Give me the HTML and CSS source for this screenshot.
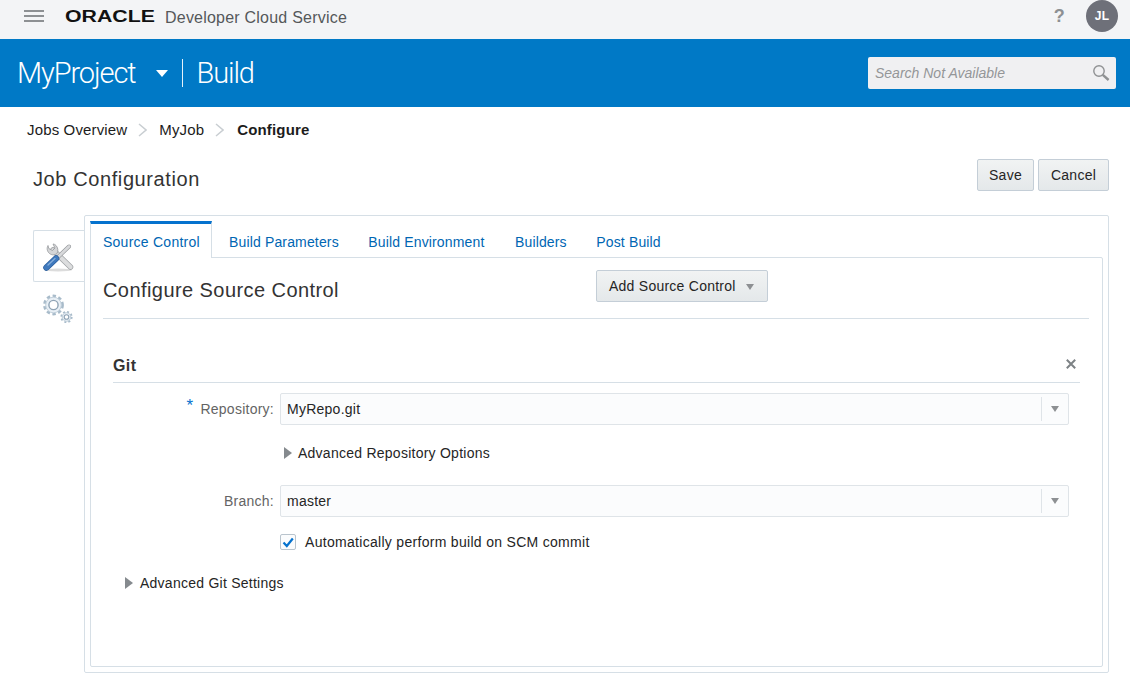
FILE: index.html
```html
<!DOCTYPE html>
<html lang="en">
<head>
    <meta charset="UTF-8">
    <meta name="viewport" content="width=device-width, initial-scale=1.0">
    <title>Job Configuration</title>
    <link rel="stylesheet" href="styles.css">
</head>
<body>
    <div class="topbar">
        <div class="burger"><span></span><span></span><span></span></div>
        <div class="logo"><span class="logo-word">ORACLE</span></div>
        <div class="product">Developer Cloud Service</div>
        <div class="help">?</div>
        <div class="avatar">JL</div>
    </div>
    <div class="projectbar">
        <div class="project">MyProject</div>
        <div class="project-arrow"></div>
        <div class="project-sep"></div>
        <div class="section">Build</div>
        <div class="search">
            <span class="search-text">Search Not Available</span>
            <svg class="search-icon" width="18" height="18" viewBox="0 0 18 18">
                <circle cx="7" cy="7" r="5.2" fill="none" stroke="#8f9193" stroke-width="1.4"/>
                <path d="M10.8 10.8 L16.6 16" stroke="#8f9193" stroke-width="2.4" fill="none"/>
            </svg>
        </div>
    </div>
    <div class="crumbs">
        <a>Jobs Overview</a>
        <svg class="crumb-sep" width="9" height="14" viewBox="0 0 9 14"><path d="M1 1 L8 7 L1 13" fill="none" stroke="#c9ced2" stroke-width="1.5"/></svg>
        <a>MyJob</a>
        <svg class="crumb-sep" width="9" height="14" viewBox="0 0 9 14"><path d="M1 1 L8 7 L1 13" fill="none" stroke="#c9ced2" stroke-width="1.5"/></svg>
        <b class="crumb-on">Configure</b>
    </div>
    <div class="pagehead">
        <h1>Job Configuration</h1>
        <button class="btn btn-save">Save</button>
        <button class="btn btn-cancel">Cancel</button>
    </div>
    <div class="workspace">
        <div class="sidetabs">
            <div class="sidetab sidetab-on">
                <svg width="32" height="32" viewBox="0 0 32 32">
                    <ellipse cx="15" cy="30" rx="14" ry="1.5" fill="#dcdcdc"/>
                    <!-- wrench -->
                    <path d="M10 10 L27.500 27" stroke="#a0a3a6" stroke-width="5.500" stroke-linecap="round"/>
                    <path d="M10 10 L27.500 27" stroke="#dcddde" stroke-width="4" stroke-linecap="round"/>
                    <path d="M5 5.500 C3.500 8 4 11.500 6.500 13.500 C9 15.500 12 15 14 13.500 C15.500 11 15 7.500 13 5.500 C12 4.500 11 4 10 4 L12 8 L9.500 10.500 L5.800 8.500 Z" fill="#d4d5d7" stroke="#94979a" stroke-width="0.8"/>
                    <!-- screwdriver -->
                    <path d="M14 18 L26 6.500" stroke="#94979a" stroke-width="4" stroke-linecap="round"/>
                    <path d="M14 18 L26 6.500" stroke="#d8d9db" stroke-width="2.800" stroke-linecap="round"/>
                    <path d="M3.500 27.500 L13 18.500" stroke="#2d5f9e" stroke-width="6.500" stroke-linecap="round"/>
                    <path d="M3.500 27.500 L13 18.500" stroke="#3f79bd" stroke-width="5" stroke-linecap="round"/>
                    <path d="M5 25 L12 18.500" stroke="#86aedb" stroke-width="1.300" stroke-linecap="round"/>
                </svg>
            </div>
            <div class="sidetab">
                <svg width="32" height="30" viewBox="0 0 32 30">
                    <circle cx="10.500" cy="12" r="8.800" fill="none" stroke="#a8bbca" stroke-width="3.200" stroke-dasharray="3.300 2.460"/>
                    <circle cx="10.500" cy="12" r="7.800" fill="#e9f0f6" stroke="#c3d1dc" stroke-width="1"/>
                    <circle cx="10.500" cy="12" r="4.600" fill="#fff" stroke="#8fa3b5" stroke-width="1.400"/>
                    <circle cx="23.500" cy="24" r="5.200" fill="none" stroke="#a8bbca" stroke-width="1.800" stroke-dasharray="2 2.080"/>
                    <circle cx="23.500" cy="24" r="4.300" fill="#e9f0f6" stroke="#b3c3d0" stroke-width="0.800"/>
                    <circle cx="23.500" cy="24" r="2.300" fill="#fff" stroke="#8fa3b5" stroke-width="1.100"/>
                </svg>
            </div>
        </div>
        <div class="panel">
            <div class="tabs">
                <div class="tab tab-on">Source Control</div>
                <div class="tab">Build Parameters</div>
                <div class="tab">Build Environment</div>
                <div class="tab tab-builders">Builders</div>
                <div class="tab">Post Build</div>
            </div>
            <div class="tabbody">
                <div class="tabhead">
                    <h2>Configure Source Control</h2>
                    <button class="btn btn-add">Add Source Control<i class="caret"></i></button>
                </div>
                <div class="git">
                    <div class="githead">
                        <h3>Git</h3>
                        <svg width="10" height="10" viewBox="0 0 10 10"><path d="M0.800 0.800 L9.200 9.200 M9.200 0.800 L0.800 9.200" stroke="#7d8285" stroke-width="2"/></svg>
                    </div>
                    <div class="row row-repo">
                        <label><span class="req">*</span>Repository:</label>
                        <div class="select"><span>MyRepo.git</span><i class="select-btn"><i class="caret"></i></i></div>
                    </div>
                    <div class="row row-adv">
                        <div class="disclose"><i class="tri"></i>Advanced Repository Options</div>
                    </div>
                    <div class="row row-branch">
                        <label>Branch:</label>
                        <div class="select"><span>master</span><i class="select-btn"><i class="caret"></i></i></div>
                    </div>
                    <div class="row row-check">
                        <span class="checkbox">
                            <svg width="14" height="13" viewBox="0 0 14 13"><path d="M2.500 6.500 L5.800 10 L11.800 2.500" fill="none" stroke="#0572ce" stroke-width="2.200"/></svg>
                        </span>
                        <span class="check-text">Automatically perform build on SCM commit</span>
                    </div>
                    <div class="disclose disclose-git"><i class="tri"></i>Advanced Git Settings</div>
                </div>
            </div>
        </div>
    </div>
</body>
</html>
```

FILE: styles.css
```css
* {
    margin: 0;
    padding: 0;
    box-sizing: border-box;
}
body {
    font-family: "Liberation Sans", Arial, sans-serif;
    font-size: 14px;
    letter-spacing: 0.25px;
    color: #252525;
    background: #fff;
    overflow: hidden;
}

/* top bar */
.topbar {
    height: 39px;
    background: #f3f4f6;
    display: flex;
    align-items: center;
    padding: 0 12px 7px 24px;
}
.burger {
    width: 20px;
    display: flex;
    flex-direction: column;
    gap: 3px;
}
.burger span {
    height: 2px;
    background: #8d9093;
}
.logo {
    width: 90px;
    margin-left: 21px;
    margin-top: 2px;
}
.logo-word {
    display: block;
    font-weight: bold;
    font-size: 16px;
    line-height: 16px;
    letter-spacing: 0;
    color: #111;
    transform: scaleX(1.33);
    transform-origin: left center;
}
.product {
    margin-left: 10px;
    font-size: 16px;
    letter-spacing: 0.22px;
    color: #55585a;
    margin-top: 4px;
}
.help {
    margin-left: auto;
    font-size: 18px;
    font-weight: bold;
    color: #8d9093;
}
.avatar {
    width: 32px;
    height: 32px;
    border-radius: 50%;
    background: #6e7079;
    color: #fff;
    font-size: 12px;
    font-weight: bold;
    display: flex;
    align-items: center;
    justify-content: center;
    margin-left: 21px;
}

/* blue bar */
.projectbar {
    height: 68px;
    background: #0079c6;
    color: #fff;
    display: flex;
    align-items: center;
    padding: 0 14px 0 17px;
    font-family: Roboto, sans-serif;
    font-weight: 300;
    font-size: 29px;
    letter-spacing: -1.1px;
}
.project-arrow {
    width: 0;
    height: 0;
    border-left: 6px solid transparent;
    border-right: 6px solid transparent;
    border-top: 7px solid #fff;
    margin-left: 20px;
}
.project-sep {
    width: 1px;
    height: 28px;
    background: #e6f2fa;
    margin: 0 14px;
}
.search {
    margin-left: auto;
    width: 248px;
    height: 32px;
    background: #f0f0f2;
    border-radius: 2px;
    display: flex;
    align-items: center;
    justify-content: space-between;
    padding: 0 6px 0 7px;
    font-family: "Liberation Sans", Arial, sans-serif;
    font-weight: normal;
    letter-spacing: 0;
}
.search-text {
    font-size: 14px;
    font-style: italic;
    color: #949698;
}

/* breadcrumbs */
.crumbs {
    height: 45px;
    display: flex;
    align-items: center;
    padding-left: 27px;
    font-size: 15px;
    letter-spacing: 0.15px;
    color: #1c1c1c;
}
.crumb-sep {
    margin: 0 12px 0 11px;
}
.crumb-on {
    margin-left: 1px;
}

/* page heading */
.pagehead {
    height: 63px;
    display: flex;
    align-items: flex-start;
    padding: 7px 21px 0 33px;
    gap: 4px;
}
.pagehead h1 {
    font-size: 20px;
    line-height: 23px;
    font-weight: normal;
    letter-spacing: 0.6px;
    color: #333;
    margin-right: auto;
    margin-top: 9px;
}
.btn {
    height: 32px;
    font-family: inherit;
    font-size: 14px;
    letter-spacing: 0.25px;
    color: #252525;
    background: linear-gradient(#f1f3f3, #e4e8ea);
    border: 1px solid #c4ced7;
    border-radius: 2px;
}
.btn-save {
    width: 57px;
}
.btn-cancel {
    width: 71px;
}

/* job panel */
.workspace {
    display: flex;
    padding-left: 33px;
}
.sidetabs {
    width: 51px;
    padding-top: 15px;
}
.sidetab {
    height: 52px;
    display: flex;
    align-items: center;
    justify-content: center;
}
.sidetab-on {
    background: #fff;
    border: 1px solid #d6dfe6;
    border-right: 0;
    border-radius: 2px 0 0 2px;
}
.panel {
    width: 1025px;
    height: 458px;
    border: 1px solid #d6dfe6;
    border-radius: 2px;
    padding: 5px;
}
.tabs {
    height: 36px;
    display: flex;
    color: #0066b3;
    letter-spacing: 0.15px;
}
.tab {
    padding: 9px 15px 0 14.500px;
    line-height: 24px;
}
.tab-on {
    width: 122px;
    padding-left: 12px;
    padding-right: 0;
    background: #fff;
    border-top: 3px solid #0572ce;
    border-left: 1px solid #d6dfe6;
    border-right: 1px solid #d6dfe6;
    padding-top: 6px;
    margin-bottom: -1px;
    position: relative;
    z-index: 1;
    margin-right: 2.500px;
    letter-spacing: 0.25px;
}
.tab-builders {
    margin-left: 1px;
}
.tabbody {
    height: 410px;
    border: 1px solid #d6dfe6;
    border-radius: 0 2px 2px 2px;
    padding: 12px 13px 0 12px;
}
.tabhead {
    height: 49px;
    border-bottom: 1px solid #d6dfe6;
    display: flex;
}
.tabhead h2 {
    width: 493px;
    font-size: 20px;
    font-weight: normal;
    letter-spacing: 0.43px;
    color: #333;
    margin-top: 9px;
}
.btn-add {
    width: 172px;
    text-align: left;
    padding-left: 12px;
}
.btn-add .caret {
    margin-left: 10px;
}
.caret {
    display: inline-block;
    width: 0;
    height: 0;
    border-left: 4.500px solid transparent;
    border-right: 4.500px solid transparent;
    border-top: 6px solid #8d9093;
    vertical-align: 1px;
}

/* git section */
.git {
    padding: 0 9px 0 10px;
}
.githead {
    height: 64px;
    border-bottom: 1px solid #d6dfe6;
    display: flex;
    align-items: flex-end;
    justify-content: space-between;
    padding: 0 4px 7px 0;
}
.githead h3 {
    font-size: 16px;
    line-height: 18px;
    letter-spacing: 0.4px;
    color: #333;
}
.githead svg {
    margin-bottom: 6px;
}
.row {
    display: flex;
    align-items: center;
    padding-left: 167px;
}
.row label {
    width: 161px;
    margin-left: -161px;
    padding-right: 6px;
    text-align: right;
    color: #646464;
    flex-shrink: 0;
}
.req {
    color: #0572ce;
    font-size: 17px;
    margin-right: 7px;
    position: relative;
    top: -3px;
}
.row-repo {
    margin-top: 10px;
}
.row-adv {
    height: 60px;
    padding-left: 171px;
    padding-bottom: 4px;
}
.row-check {
    margin-top: 17px;
    gap: 9px;
    height: 16px;
}
.check-text {
    letter-spacing: 0.3px;
}
.select {
    width: 789px;
    height: 32px;
    background: #fbfcfd;
    border: 1px solid #dfe4e8;
    border-radius: 2px;
    display: flex;
    align-items: center;
    justify-content: space-between;
    padding-left: 6px;
    color: #252525;
}
.select-btn {
    width: 27px;
    height: 24px;
    border-left: 1px solid #dfe4e8;
    display: flex;
    align-items: center;
    justify-content: center;
}
.disclose {
    display: flex;
    align-items: center;
}
.tri {
    width: 0;
    height: 0;
    border-top: 6px solid transparent;
    border-bottom: 6px solid transparent;
    border-left: 8px solid #858a8e;
    margin-right: 6px;
}
.disclose-git {
    margin-top: 25px;
    padding-left: 12px;
    height: 16px;
}
.disclose-git .tri {
    margin-right: 7px;
}
.checkbox {
    width: 16px;
    height: 16px;
    background: #fbfcfd;
    border: 1px solid #b9c4cd;
    border-radius: 2px;
    display: flex;
    align-items: center;
    justify-content: center;
}
```
